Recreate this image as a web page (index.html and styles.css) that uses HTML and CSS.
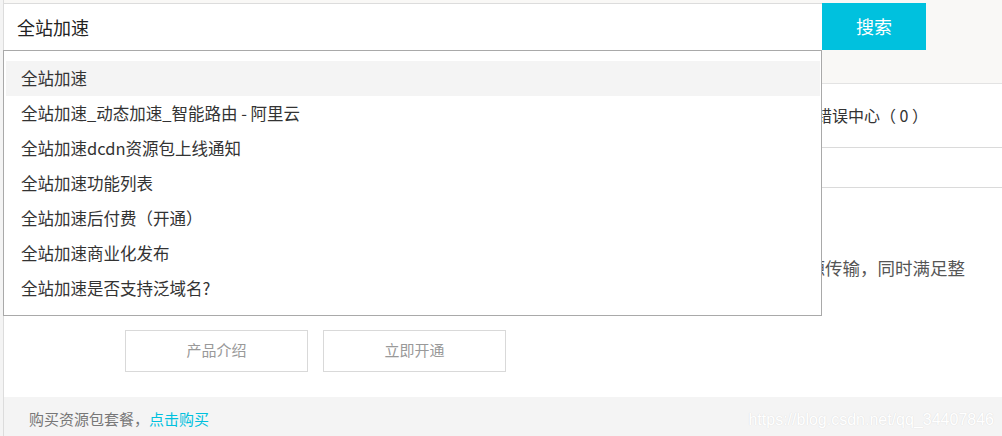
FILE: index.html
```html
<!DOCTYPE html>
<html lang="zh-CN">
<head>
<meta charset="utf-8">
<title>全站加速</title>
<link rel="stylesheet" href="styles.css">
</head>
<body>
<div class="page">
  <div class="top">
    <form class="search">
      <div class="search-input">全站加速</div>
      <button class="search-btn" type="button">搜索</button>
    </form>
  </div>
  <div class="tabs">
    <span class="tab">全部</span>
    <span class="tab">产品动态</span>
    <span class="tab">文档</span>
    <span class="tab">问答</span>
    <span class="tab">博客</span>
    <span class="tab">错误中心（ 0 ）</span>
  </div>
  <div class="subbar"></div>
  <div class="content">
    <p class="desc">全站加速融合动静态加速，智能区分动静态内容，静态就近缓存，动态路由，实现动静资源传输，同时满足整站安全防护需求，提升访问体验。</p>
    <div class="actions">
      <a class="btn">产品介绍</a>
      <a class="btn">立即开通</a>
    </div>
  </div>
  <div class="footer">
    <span>购买资源包套餐，</span><a class="link">点击购买</a>
  </div>

  <ul class="suggest">
    <li class="item active">全站加速</li>
    <li class="item">全站加速_动态加速_智能路由 - 阿里云</li>
    <li class="item">全站加速dcdn资源包上线通知</li>
    <li class="item">全站加速功能列表</li>
    <li class="item">全站加速后付费（开通）</li>
    <li class="item">全站加速商业化发布</li>
    <li class="item">全站加速是否支持泛域名?</li>
  </ul>
  <div class="watermark">https://blog.csdn.net/qq_34407846</div>
</div>
</body>
</html>
```

FILE: styles.css
```css
* { box-sizing: border-box; }
html, body {
  margin: 0;
  padding: 0;
}
body {
  background: #f4f4f4;
  width: 1002px;
  height: 436px;
  overflow: hidden;
  font-family: "Noto Sans CJK SC", "Noto Sans", sans-serif;
  color: #333;
}
.page {
  position: relative;
  margin-left: 3px;
  border-left: 1px solid #dcdcdc;
  background: #fff;
  height: 436px;
}
.top {
  background: #f9f8f6;
  padding-top: 3px;
  height: 84px;
  border-bottom: 1px solid #e3e3e3;
}
.search {
  display: flex;
  margin: 0;
}
.search-input {
  width: 818px;
  height: 47px;
  border-top: 1px solid #dcdcdc;
  background: #fff;
  padding-left: 13px;
  font-size: 18px;
  line-height: 46px;
  color: #222;
}
.search-btn {
  width: 104px;
  height: 47px;
  border: 0;
  margin: 0;
  padding: 0 0 2px;
  background: #00c1de;
  color: #fff;
  font-family: inherit;
  font-size: 18px;
}
.tabs {
  display: flex;
  height: 64px;
  align-items: center;
  padding-left: 12px;
  padding-bottom: 2px;
  border-bottom: 1px solid #dadada;
  font-size: 16px;
  color: #333;
}
.tab {
  width: 160px;
  flex: none;
  white-space: nowrap;
}
.subbar {
  height: 40px;
  border-bottom: 1px solid #dadada;
}
.content {
  padding: 66px 0 25px 121px;
}
.desc {
  margin: 0;
  width: 852px;
  font-size: 17.5px;
  line-height: 28px;
  color: #555;
}
.actions {
  display: flex;
  gap: 15px;
  margin-top: 20px;
}
.btn {
  display: flex;
  align-items: center;
  justify-content: center;
  width: 183px;
  height: 42px;
  padding-bottom: 4px;
  border: 1px solid #d9d9d9;
  font-size: 15px;
  color: #999;
}
.footer {
  background: #f4f4f4;
  height: 40px;
  padding-left: 25px;
  font-size: 15px;
  line-height: 44px;
  color: #777;
}
.link {
  color: #00c1de;
}
.suggest {
  position: absolute;
  left: -1px;
  top: 50px;
  width: 819px;
  height: 266px;
  margin: 0;
  padding: 10px 1px 10px 2px;
  list-style: none;
  background: #fff;
  border: 1px solid #a9a9a9;
}
.item {
  height: 35px;
  line-height: 35px;
  padding-left: 15px;
  font-size: 16.5px;
  color: #333;
  white-space: nowrap;
}
.item.active {
  background: #f4f4f4;
}
.watermark {
  position: absolute;
  right: 8px;
  bottom: 7px;
  font-family: "Liberation Sans", Arial, sans-serif;
  font-size: 16px;
  color: #fff;
  text-shadow: 0 0 1px #dedede, 0 0 1px #e4e4e4;
}
```
